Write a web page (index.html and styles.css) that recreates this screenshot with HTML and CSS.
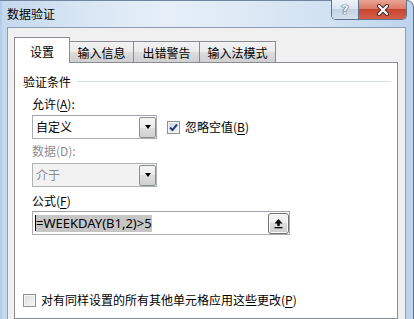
FILE: index.html
```html
<!doctype html>
<html lang="zh-CN">
  <head>
    <meta charset="UTF-8" />
    <meta name="viewport" content="width=device-width, initial-scale=1.0" />
    <title>数据验证</title>
    <link rel="stylesheet" href="styles.css">
  </head>

  <body>
    <div class="window">
      <div class="titlebar">
        <span class="title">数据验证</span>
        <div class="caption">
          <div class="cap-btn cap-help">?</div>
          <div class="cap-btn cap-close">
            <svg width="14" height="12" viewBox="0 0 14 12">
              <path d="M3 2 L11 10 M11 2 L3 10" stroke="#4b2622" stroke-width="4" stroke-linecap="round" fill="none" />
              <path d="M3 2 L11 10 M11 2 L3 10" stroke="#fff" stroke-width="2.2" stroke-linecap="round" fill="none" />
            </svg>
          </div>
        </div>
      </div>

      <div class="client">
        <div class="tabs">
          <div class="tab tab-active">设置</div>
          <div class="tab tab-2">输入信息</div>
          <div class="tab tab-3">出错警告</div>
          <div class="tab tab-4">输入法模式</div>
        </div>

        <div class="panel">
          <div class="group-title">
            <span>验证条件</span>
            <div class="group-line"></div>
          </div>

          <div class="form">
            <div class="label">允许(<u>A</u>):</div>
            <div class="row">
              <div class="combo">
                <span class="combo-text">自定义</span>
                <div class="combo-btn"><span class="arrow"></span></div>
              </div>
              <div class="check">
                <span class="box box-checked">
                  <svg width="11" height="11" viewBox="0 0 11 11">
                    <path d="M2 5.5 L4.5 8 L9 2.5" stroke="#2b3d78" stroke-width="2" fill="none" />
                  </svg>
                </span>
                <span>忽略空值(<u>B</u>)</span>
              </div>
            </div>

            <div class="label label-disabled">数据(D):</div>
            <div class="combo combo-disabled">
              <span class="combo-text">介于</span>
              <div class="combo-btn"><span class="arrow"></span></div>
            </div>

            <div class="label label-formula">公式(<u>F</u>)</div>
            <div class="input">
              <span class="caret"></span>
              <span class="selected">=WEEKDAY(B1,2)&gt;5</span>
              <div class="ref-btn">
                <svg width="11" height="11" viewBox="0 0 11 11">
                  <path d="M5.5 1 L9.5 5.5 L6.7 5.5 L6.7 8 L4.3 8 L4.3 5.5 L1.5 5.5 Z" fill="#000" />
                  <rect x="1.5" y="9" width="8" height="1.3" fill="#000" />
                </svg>
              </div>
            </div>
          </div>

          <div class="check check-bottom">
            <span class="box"></span>
            <span>对有同样设置的所有其他单元格应用这些更改(<u>P</u>)</span>
          </div>
        </div>
      </div>
    </div>
  </body>
</html>
```

FILE: styles.css
```css
html,
body {
  width: 100%;
  height: 100%;
  overflow: hidden;
  padding: 0;
  margin: 0;
}

body {
  font-family: "Noto Sans CJK SC", "Noto Sans", sans-serif;
  font-size: 12px;
  color: #000;
  background-color: #fff;
}

u {
  text-decoration-thickness: 1px;
  text-underline-offset: 2px;
}

.window {
  box-sizing: border-box;
  width: 414px;
  height: 319px;
  padding: 0 7px;
  display: flex;
  flex-direction: column;
  border-top: 1px solid #71869e;
  border-right: 1px solid #5d7189;
  border-top-right-radius: 7px;
  background: linear-gradient(90deg, #c4d8ee 0%, #d8e6f4 20%, #e6eff8 40%, #dde9f5 60%, #cddff1 85%, #bcd3ec 100%);
  box-shadow: inset 2px 0 0 #b3cdea;
}

.titlebar {
  height: 26px;
  display: flex;
  align-items: flex-start;
}

.title {
  line-height: 26px;
  color: #000;
}

.caption {
  margin-left: auto;
  margin-top: -1px;
  margin-right: -1px;
  height: 19px;
  display: flex;
  border: 1px solid #61738a;
  border-top: none;
  border-radius: 0 0 5px 5px;
  overflow: hidden;
}

.cap-btn {
  height: 19px;
  display: flex;
  align-items: center;
  justify-content: center;
}

.cap-help {
  width: 26px;
  border-right: 1px solid #61738a;
  background: linear-gradient(#eef3f9, #dbe5f0 45%, #c4d3e4 50%, #d3e0ee);
  font-family: "DejaVu Sans", sans-serif;
  font-weight: bold;
  font-size: 13px;
  color: #f3f6fa;
  text-shadow: 0 0 1px #3d4f68, 0 0 1px #3d4f68, 0 0 1px #3d4f68;
}

.cap-close {
  width: 47px;
  background: linear-gradient(#e9a596, #dc7a69 45%, #c7452f 50%, #d4604c);
}

.client {
  flex: 1;
  display: flex;
  flex-direction: column;
  padding: 9px 7px 0 6px;
  background-color: #f0f0f0;
  border: 1px solid #8d9cb0;
  border-bottom: none;
}

.tabs {
  height: 26px;
  margin-bottom: -1px;
  display: flex;
  position: relative;
  z-index: 1;
}

.tab {
  box-sizing: border-box;
  height: 21px;
  margin-top: 4px;
  margin-left: -1px;
  padding-top: 3px;
  line-height: 16px;
  text-align: center;
  border: 1px solid #898c95;
  border-bottom: none;
  background: linear-gradient(#f2f2f2, #ebebeb 50%, #dddddd 50%, #cfcfcf);
}

.tab-active {
  height: 26px;
  width: 56px;
  margin-top: 0;
  margin-left: 0;
  padding-top: 6px;
  background: #fff;
}

.tab-2 {
  width: 65px;
}

.tab-3 {
  width: 67px;
}

.tab-4 {
  width: 77px;
}

.panel {
  box-sizing: border-box;
  height: 257px;
  display: flex;
  flex-direction: column;
  padding: 11px 6px 10px 8px;
  background-color: #fff;
  border: 1px solid #898c95;
}

.group-title {
  display: flex;
  align-items: center;
  gap: 6px;
  line-height: 16px;
}

.group-line {
  flex: 1;
  height: 1px;
  margin-top: -2px;
  background-color: #d5dfe5;
}

.form {
  padding-left: 9px;
  display: flex;
  flex-direction: column;
  align-items: flex-start;
}

.label {
  margin-top: 6px;
  line-height: 16px;
}

.label-disabled {
  margin-top: 4px;
  color: #8d8d8d;
}

.label-formula {
  margin-top: 6px;
}

.row {
  margin-top: 3px;
  display: flex;
  align-items: center;
  gap: 10px;
}

.combo {
  box-sizing: border-box;
  width: 125px;
  height: 24px;
  display: flex;
  align-items: center;
  border: 1px solid #abadb3;
  border-top-color: #a0a3ab;
  background-color: #fff;
}

.combo-disabled {
  margin-top: 4px;
  border-color: #adb2b5;
  background-color: #f2f2f2;
  color: #8d8d8d;
}

.combo-text {
  flex: 1;
  padding-left: 3px;
  line-height: 16px;
}

.combo-btn {
  box-sizing: border-box;
  width: 17px;
  height: 21px;
  display: flex;
  align-items: center;
  justify-content: center;
  border: 1px solid #8e8f8f;
  border-radius: 2px;
  background: linear-gradient(#f4f4f4, #ececec 50%, #dedede 50%, #d0d0d0);
}

.arrow {
  width: 0;
  height: 0;
  border-left: 3.5px solid transparent;
  border-right: 3.5px solid transparent;
  border-top: 4px solid #000;
}

.check {
  display: flex;
  align-items: center;
  gap: 5px;
  line-height: 16px;
}

.box {
  box-sizing: border-box;
  width: 13px;
  height: 13px;
  display: flex;
  align-items: center;
  justify-content: center;
  border: 1px solid #8e8f8f;
  background: linear-gradient(135deg, #dcdcdc, #f6f6f6);
  box-shadow: inset 0 0 0 1px #f4f4f4;
}

.box-checked {
  background: linear-gradient(135deg, #cbd6e6, #f2f5fa);
}

.input {
  box-sizing: border-box;
  width: 258px;
  height: 24px;
  margin-top: 2px;
  display: flex;
  align-items: center;
  border: 1px solid #abadb3;
  border-top-color: #a0a3ab;
  background-color: #fff;
}

.caret {
  width: 1px;
  height: 16px;
  margin-left: 2px;
  background-color: #000;
}

.selected {
  flex: 0 0 auto;
  font-family: "Noto Sans", sans-serif;
  font-size: 13px;
  line-height: 17px;
  background-color: #c6c6c6;
}

.ref-btn {
  box-sizing: border-box;
  width: 21px;
  height: 21px;
  margin-left: auto;
  display: flex;
  align-items: center;
  justify-content: center;
  border: 1px solid #707070;
  border-radius: 3px;
  background: linear-gradient(#f6f6f6, #ebebeb 50%, #dddddd 50%, #cfcfcf);
  box-shadow: inset 0 0 0 1px #fcfcfc;
}

.check-bottom {
  margin-top: auto;
}
```
